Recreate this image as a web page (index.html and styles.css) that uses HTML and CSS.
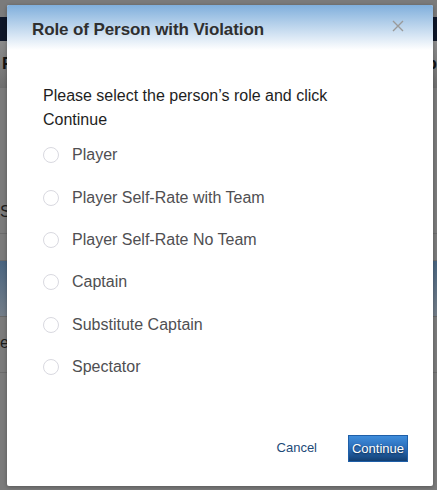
FILE: index.html
```html
<!DOCTYPE html>
<html>
  <head>
    <meta charset="UTF-8">
    <title>Role of Person with Violation</title>
    <link rel="stylesheet" href="styles.css">
  </head>
  <body>
    <div class="page">
      <div class="top-gap"></div>
      <div class="nav-bar"></div>
      <div class="sub-head">Report a Violation<span class="sub-head-end">Help</span></div>
      <div class="page-body">
        <div class="page-row page-row-text">Search</div>
        <div class="page-row page-row-thin"></div>
        <div class="page-row page-row-blue"></div>
        <div class="page-row page-row-text2">entries</div>
      </div>
    </div>

    <div class="modal">
      <div class="modal-header">
        <div class="modal-title">Role of Person with Violation</div>
        <button class="close-btn" aria-label="Close">
          <svg width="12" height="12" viewBox="0 0 12 12">
            <path d="M1 1 L11 11 M11 1 L1 11" stroke="#9a9a9a" stroke-width="1.4" fill="none"/>
          </svg>
        </button>
      </div>

      <div class="modal-body">
        <p class="intro">Please select the person’s role and click Continue</p>
        <label class="role"><input type="radio" name="role"><span class="dot"></span>Player</label>
        <label class="role"><input type="radio" name="role"><span class="dot"></span>Player Self-Rate with Team</label>
        <label class="role"><input type="radio" name="role"><span class="dot"></span>Player Self-Rate No Team</label>
        <label class="role"><input type="radio" name="role"><span class="dot"></span>Captain</label>
        <label class="role"><input type="radio" name="role"><span class="dot"></span>Substitute Captain</label>
        <label class="role"><input type="radio" name="role"><span class="dot"></span>Spectator</label>
      </div>

      <div class="modal-footer">
        <a href="#" class="cancel-link">Cancel</a>
        <button class="continue-btn">Continue</button>
      </div>
    </div>
  </body>
</html>
```

FILE: styles.css
```css
body {
  margin: 0px;
  padding: 0px;
  background-color: #7b7b7b;
  font-family: 'Liberation Sans', Arial, sans-serif;
  overflow: hidden;
}

.page {
  height: 490px;
}

.top-gap {
  height: 17px;
}

.nav-bar {
  height: 24px;
  background-color: #0e1628;
}

.sub-head {
  height: 47px;
  background: linear-gradient(#8c8c8c, #6f6f6f);
  color: #141414;
  font-weight: bold;
  font-size: 17px;
  line-height: 46px;
  padding-left: 2px;
  display: flex;
  justify-content: space-between;
}

.page-body {
  padding-top: 115px;
}

.page-row {
  border-bottom: 1px solid #6b6b6b;
}

.page-row-text {
  height: 30px;
  font-size: 16px;
  color: #1c1c1c;
}

.page-row-thin {
  height: 26px;
}

.page-row-blue {
  height: 55px;
  background: linear-gradient(#4a6580, #737d88);
  border-bottom: 1px solid #686868;
}

.page-row-text2 {
  height: 55px;
  line-height: 52px;
  font-size: 16px;
  color: #1c1c1c;
}

/* dialog */
.modal {
  position: absolute;
  left: 7px;
  top: 5px;
  width: 426px;
  height: 481px;
  background-color: #fff;
  border-radius: 2px;
  box-shadow: 0 1px 4px rgba(0, 0, 0, 0.3);
  display: flex;
  flex-direction: column;
}

.modal-header {
  height: 45px;
  background: linear-gradient(#80afdc, #ffffff);
  border-radius: 2px 2px 0 0;
  display: flex;
  justify-content: space-between;
  padding: 0 29px 0 25px;
}

.modal-title {
  font-size: 17px;
  font-weight: bold;
  color: #2f2f2f;
  line-height: 22px;
  padding-top: 14px;
  letter-spacing: -0.1px;
}

.close-btn {
  border: none;
  background: none;
  padding: 0;
  margin-top: 15px;
  height: 12px;
  cursor: pointer;
}

.modal-body {
  padding: 34px 20px 0 36px;
  flex: 1;
}

.intro {
  margin: 0 0 2px 0;
  font-size: 16px;
  line-height: 24px;
  color: #1e1e1e;
  width: 310px;
}

.role {
  display: flex;
  align-items: center;
  height: 42.4px;
  font-size: 16px;
  color: #4f4f52;
  cursor: pointer;
}

.role input {
  display: none;
}

.dot {
  width: 16px;
  height: 16px;
  border: 1px solid #d9d9e0;
  border-radius: 50%;
  box-sizing: border-box;
  margin-right: 13px;
}

.modal-footer {
  display: flex;
  justify-content: flex-end;
  align-items: center;
  padding: 0 25px 24px 0;
  gap: 31px;
}

.cancel-link {
  color: #1d4a78;
  font-size: 13px;
  text-decoration: none;
  margin-top: -2px;
}

.continue-btn {
  height: 27px;
  width: 60px;
  border: 1px solid #1f5fa8;
  background: linear-gradient(#3f8ddb, #2a6cb8 50%, #123f72);
  color: white;
  font-family: 'Liberation Sans', Arial, sans-serif;
  font-size: 13px;
  padding: 0;
  text-shadow: 0 1px 2px #0b2747;
  cursor: pointer;
}
```
